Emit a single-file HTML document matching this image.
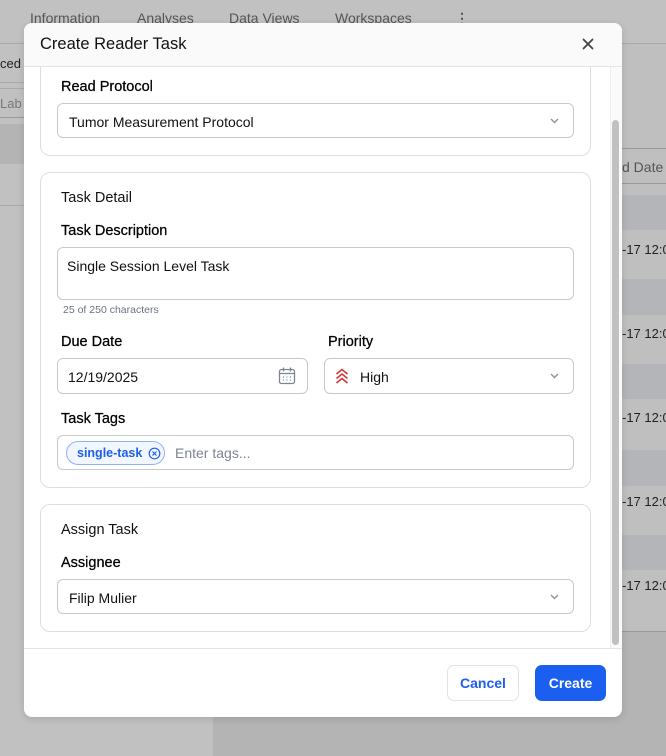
<!DOCTYPE html>
<html><head><meta charset="utf-8"><style>
*{box-sizing:border-box;margin:0;padding:0}
body{width:666px;height:756px;overflow:hidden;position:relative;background:#c1c1c1;font-family:"Liberation Sans",Arial,sans-serif;color:#111}
.a{position:absolute;white-space:nowrap}
.bgt{color:#555;font-size:14px}
.lbl{position:absolute;font-size:14.5px;color:#000;-webkit-text-stroke:0.25px #000;white-space:nowrap}
.inp{position:absolute;border:1px solid #c9c9c9;border-radius:6px;background:#fff;font-size:14px;color:#111;white-space:nowrap}
.card{position:absolute;left:16px;width:551px;border:1px solid #dedede;border-radius:10px;background:#fff}
.chev{position:absolute;right:14px;top:50%;margin-top:-3px}
</style></head><body>
<div class="a" style="left:213px;top:0;width:453px;height:756px;background:#b3b4b3"></div>
<div class="a" style="left:0;top:0;width:666px;height:44px;background:#c1c1c1"></div>
<div class="a bgt" style="left:30px;top:10px">Information</div>
<div class="a bgt" style="left:137px;top:10px">Analyses</div>
<div class="a bgt" style="left:229px;top:10px">Data Views</div>
<div class="a bgt" style="left:335px;top:10px">Workspaces</div>
<div class="a bgt" style="left:455px;top:10px;font-weight:bold">⋮</div>
<div class="a" style="left:0;top:43px;width:666px;height:1px;background:#aaa"></div>
<div class="a" style="left:0;top:44px;width:213px;height:80px;background:#c1c1c1"></div>
<div class="a bgt" style="left:0;top:56px;color:#222;font-size:13px">ced</div>
<div class="a" style="left:0;top:82px;width:24px;height:1px;background:#aaa"></div>
<div class="a" style="left:0;top:88px;width:24px;height:1px;background:#aaa"></div>
<div class="a bgt" style="left:0;top:96px;font-size:13px;color:#777">Lab</div>
<div class="a" style="left:0;top:117px;width:24px;height:1px;background:#999"></div>
<div class="a" style="left:0;top:124px;width:213px;height:40px;background:#b3b4b3"></div>
<div class="a" style="left:0;top:164px;width:213px;height:592px;background:#c1c1c1"></div>
<div class="a" style="left:0;top:205px;width:24px;height:1px;background:#aaa"></div>
<div class="a" style="left:622px;top:44px;width:44px;height:587px;background:#bfbfbf"></div>
<div class="a" style="left:622px;top:148px;width:44px;height:1px;background:#999"></div>
<div class="a" style="left:622px;top:183px;width:44px;height:1px;background:#999"></div>
<div class="a bgt" style="left:622px;top:159px">d Date</div>
<div class="a" style="left:622px;top:195px;width:44px;height:35px;background:#b4b5b8"></div>
<div class="a" style="left:622px;top:279px;width:44px;height:36px;background:#b4b5b8"></div>
<div class="a" style="left:622px;top:364px;width:44px;height:35px;background:#b4b5b8"></div>
<div class="a" style="left:622px;top:450px;width:44px;height:36px;background:#b4b5b8"></div>
<div class="a" style="left:622px;top:535px;width:44px;height:35px;background:#b4b5b8"></div>
<div class="a" style="left:622px;top:242px;font-size:13px;color:#222">-17 12:00</div>
<div class="a" style="left:622px;top:326px;font-size:13px;color:#222">-17 12:00</div>
<div class="a" style="left:622px;top:410px;font-size:13px;color:#222">-17 12:00</div>
<div class="a" style="left:622px;top:494px;font-size:13px;color:#222">-17 12:00</div>
<div class="a" style="left:622px;top:578px;font-size:13px;color:#222">-17 12:00</div>
<div class="a" style="left:622px;top:631px;width:44px;height:1px;background:#999"></div>
<div class="a" style="left:622px;top:632px;width:44px;height:124px;background:#b3b4b3"></div>

<div class="a" style="left:24px;top:23px;width:598px;height:694px;background:#fff;border-radius:8px;overflow:hidden;box-shadow:0 2px 8px rgba(0,0,0,.12)">
  <div class="a" style="left:586px;top:44px;width:12px;height:581px;background:#fafafa;border-left:1px solid #eee"></div>
  <div class="a" style="left:588px;top:97px;width:7px;height:525px;background:#c1c1c1;border-radius:4px"></div>

  <div class="card" style="top:20px;height:113px;border-top-left-radius:0;border-top-right-radius:0"></div>
  <div class="lbl" style="left:37px;top:56px">Read Protocol</div>
  <div class="inp" style="left:33px;top:80px;width:517px;height:35px;padding:10px 11px">Tumor Measurement Protocol
    <svg class="chev" width="9" height="6" viewBox="0 0 9 6"><path d="M1 1l3.5 3.5L8 1" stroke="#8b93a0" stroke-width="1.4" fill="none"/></svg></div>

  <div class="card" style="top:149px;height:316px"></div>
  <div class="a" style="left:37px;top:167px;font-size:14.5px;color:#111">Task Detail</div>
  <div class="lbl" style="left:37px;top:200px">Task Description</div>
  <div class="inp" style="left:33px;top:224px;width:517px;height:53px;padding:10px 9px">Single Session Level Task</div>
  <div class="a" style="left:39px;top:281px;font-size:10.5px;color:#6b7382">25 of 250 characters</div>
  <div class="lbl" style="left:37px;top:311px">Due Date</div>
  <div class="inp" style="left:33px;top:335px;width:251px;height:36px;padding:10px 10px">12/19/2025
    <svg class="a" style="left:219px;top:7px" width="20" height="20" viewBox="0 0 20 20" fill="none" stroke="#7d8593" stroke-width="1.3"><rect x="2.5" y="3.5" width="15" height="14" rx="2"/><path d="M2.5 7.5h15M6.5 1.5v4M13.5 1.5v4"/><g stroke-width="1.4"><path d="M6 11h.8M9.6 11h.8M13.2 11h.8M6 14h.8M9.6 14h.8M13.2 14h.8"/></g></svg></div>
  <div class="lbl" style="left:304px;top:311px">Priority</div>
  <div class="inp" style="left:300px;top:335px;width:250px;height:36px;padding:10px 10px 10px 35px">High
    <svg class="a" style="left:10px;top:9px" width="14" height="16" viewBox="0 0 14 16" fill="none" stroke="#d6363b" stroke-width="1.6"><path d="M1.5 6L7 1.5 12.5 6M1.5 10.5L7 6 12.5 10.5M1.5 15L7 10.5 12.5 15"/></svg>
    <svg class="chev" width="9" height="6" viewBox="0 0 9 6"><path d="M1 1l3.5 3.5L8 1" stroke="#8b93a0" stroke-width="1.4" fill="none"/></svg></div>
  <div class="lbl" style="left:37px;top:388px">Task Tags</div>
  <div class="inp" style="left:33px;top:412px;width:517px;height:35px"></div>
  <div class="a" style="left:42px;top:418px;width:99px;height:24px;border:1px solid #8fb1f5;border-radius:12px;background:#f2f6ff;font-size:12.5px;font-weight:bold;color:#1d5fe8;padding:4px 0 0 10px">single-task
    <svg class="a" style="left:81px;top:5px" width="13" height="13" viewBox="0 0 13 13" fill="none" stroke="#1d5fe8" stroke-width="1.2"><circle cx="6.5" cy="6.5" r="5.3"/><path d="M4.5 4.5l4 4M8.5 4.5l-4 4"/></svg></div>
  <div class="a" style="left:151px;top:422px;font-size:14px;color:#7d8593">Enter tags...</div>

  <div class="card" style="top:481px;height:128px"></div>
  <div class="a" style="left:37px;top:499px;font-size:14.5px;color:#111">Assign Task</div>
  <div class="lbl" style="left:37px;top:532px">Assignee</div>
  <div class="inp" style="left:33px;top:556px;width:517px;height:35px;padding:10px 11px">Filip Mulier
    <svg class="chev" width="9" height="6" viewBox="0 0 9 6"><path d="M1 1l3.5 3.5L8 1" stroke="#8b93a0" stroke-width="1.4" fill="none"/></svg></div>

  <div class="a" style="left:0;top:625px;width:598px;height:1px;background:#e3e3ea"></div>
  <div class="a" style="left:423px;top:642px;width:72px;height:36px;border:1px solid #e2e2e2;border-radius:7px;font-size:14px;font-weight:bold;color:#1d5fe8;text-align:center;line-height:34px">Cancel</div>
  <div class="a" style="left:511px;top:642px;width:71px;height:36px;background:#1a5ff0;border-radius:7px;font-size:14px;font-weight:bold;color:#fff;text-align:center;line-height:36px">Create</div>

  <div class="a" style="left:0;top:0;width:598px;height:44px;background:#fafafa;border-bottom:1px solid #e3e3ea;z-index:5"></div>
  <div class="a" style="left:16px;top:12px;font-size:16.5px;color:#111;z-index:6">Create Reader Task</div>
  <svg class="a" style="left:558px;top:15px;z-index:6" width="12" height="12" viewBox="0 0 12 12"><path d="M1.5 1.5L10.5 10.5M10.5 1.5L1.5 10.5" stroke="#444" stroke-width="1.8" stroke-linecap="round"/></svg>
</div>
</body></html>
